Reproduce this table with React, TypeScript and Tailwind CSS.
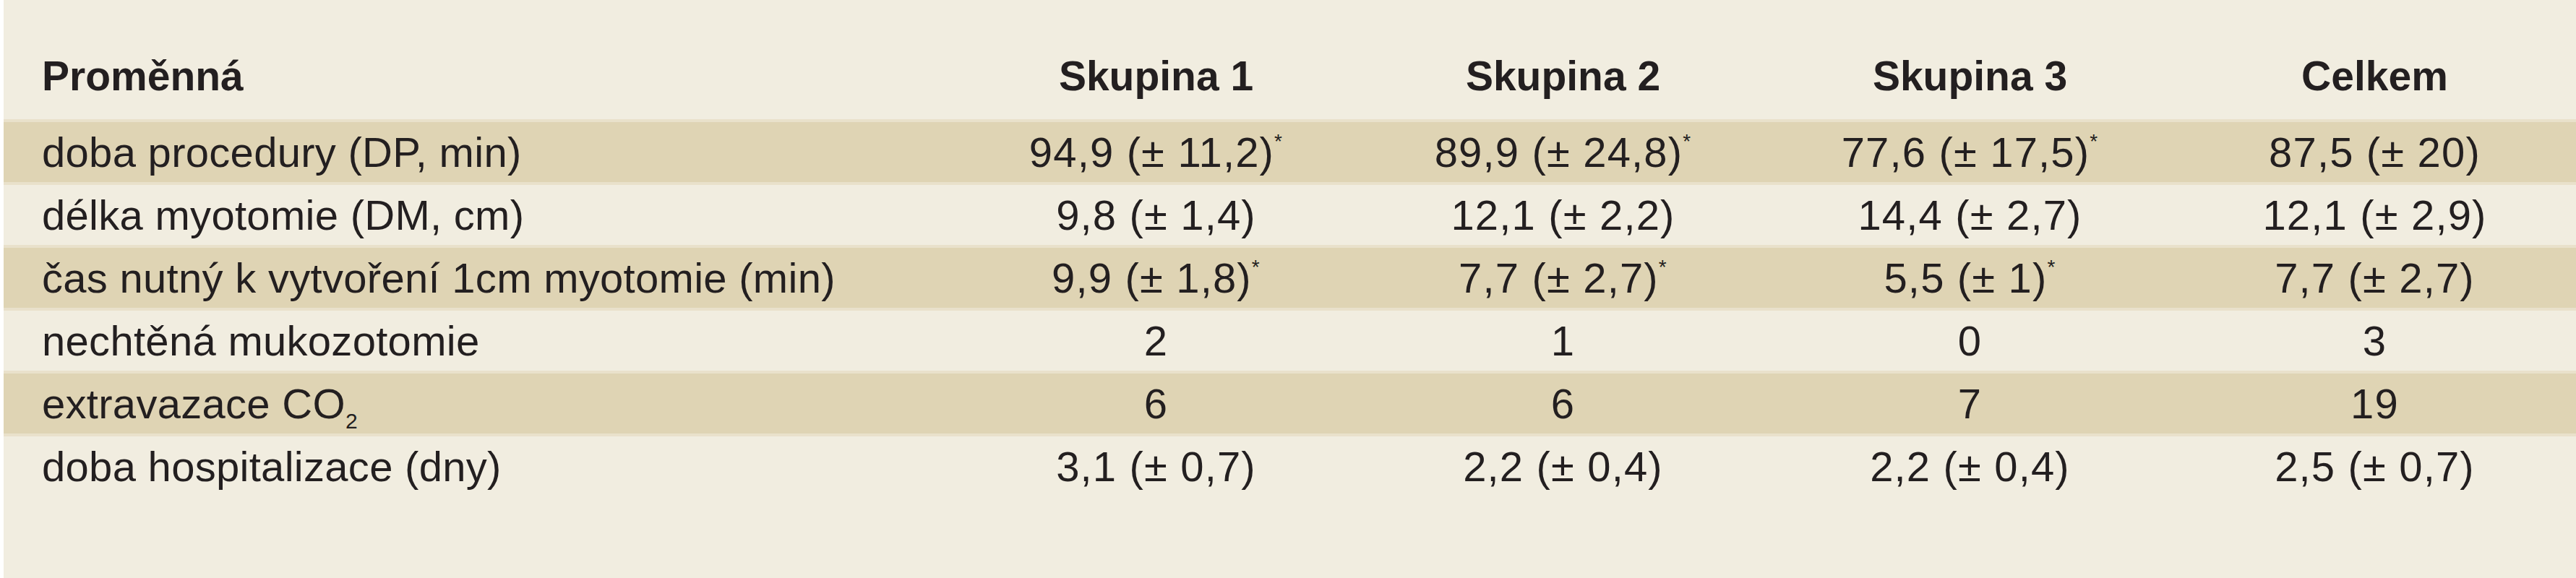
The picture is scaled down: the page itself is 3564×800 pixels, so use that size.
import React from 'react';

type Row = { label: React.ReactNode; values: { v: string; star?: boolean }[]; shaded: boolean };

const ROWS: Row[] = [
  {
    label: 'doba procedury (DP, min)',
    values: [
      { v: '94,9 (± 11,2)', star: true },
      { v: '89,9 (± 24,8)', star: true },
      { v: '77,6 (± 17,5)', star: true },
      { v: '87,5 (± 20)' },
    ],
    shaded: true,
  },
  {
    label: 'délka myotomie (DM, cm)',
    values: [{ v: '9,8 (± 1,4)' }, { v: '12,1 (± 2,2)' }, { v: '14,4 (± 2,7)' }, { v: '12,1 (± 2,9)' }],
    shaded: false,
  },
  {
    label: 'čas nutný k vytvoření 1cm myotomie (min)',
    values: [
      { v: '9,9 (± 1,8)', star: true },
      { v: '7,7 (± 2,7)', star: true },
      { v: '5,5 (± 1)', star: true },
      { v: '7,7 (± 2,7)' },
    ],
    shaded: true,
  },
  {
    label: 'nechtěná mukozotomie',
    values: [{ v: '2' }, { v: '1' }, { v: '0' }, { v: '3' }],
    shaded: false,
  },
  {
    label: (
      <>
        extravazace CO<sub className="text-[30px] relative top-[14px] align-baseline">2</sub>
      </>
    ),
    values: [{ v: '6' }, { v: '6' }, { v: '7' }, { v: '19' }],
    shaded: true,
  },
  {
    label: 'doba hospitalizace (dny)',
    values: [{ v: '3,1 (± 0,7)' }, { v: '2,2 (± 0,4)' }, { v: '2,2 (± 0,4)' }, { v: '2,5 (± 0,7)' }],
    shaded: false,
  },
];

const HEADERS = ['Skupina 1', 'Skupina 2', 'Skupina 3', 'Celkem'];

export default function App() {
  return (
    <div
      className="w-[3564px] h-[800px] bg-[#f1ede0] border-l-[5px] border-white text-[#231f20] overflow-hidden"
      style={{ fontFamily: '"Liberation Sans", Arial, sans-serif' }}
    >
      {/* header */}
      <div className="grid grid-cols-[1313px_563px_563px_563px_1fr] h-[165px] items-end pb-[31px] text-[57px] leading-[58px] font-bold">
        <div className="pl-[53px]">Proměnná</div>
        {HEADERS.map((h) => (
          <div key={h} className="text-center">
            {h}
          </div>
        ))}
      </div>

      {/* body rows */}
      {ROWS.map((r, i) => (
        <div
          key={i}
          className={`grid grid-cols-[1313px_563px_563px_563px_1fr] h-[87px] items-center border-t-[4px] border-[#e9e1cb] ${
            r.shaded ? 'bg-[#dfd4b4]' : 'bg-[#f1ede0]'
          }`}
        >
          <div className="pl-[53px] text-[58px] leading-none tracking-[0.005em] whitespace-nowrap">{r.label}</div>
          {r.values.map((c, j) => (
            <div key={j} className="text-center text-[58px] leading-none tracking-[0.02em] whitespace-nowrap">
              {c.v}
              {c.star && <span className="text-[28px] relative -top-[26px]">*</span>}
            </div>
          ))}
        </div>
      ))}
    </div>
  );
}
